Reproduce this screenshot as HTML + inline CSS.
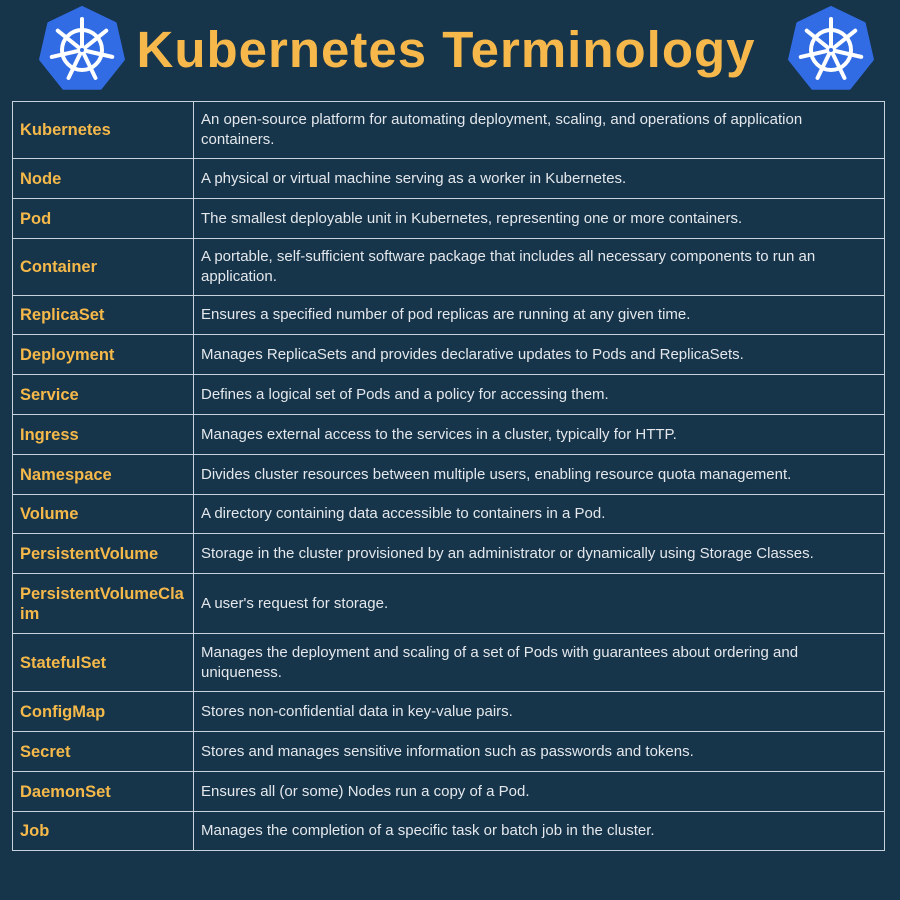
<!DOCTYPE html>
<html><head><meta charset="utf-8"><style>
body{margin:0;width:900px;height:900px;background:#16344a;font-family:"Liberation Sans",sans-serif;position:relative;overflow:hidden}
.t{position:absolute;left:0;width:892px;top:20px;text-align:center;font-size:51px;font-weight:bold;color:#f7b84b;letter-spacing:1px}
.logo{position:absolute;top:6px}
table{position:absolute;left:12px;top:101px;width:873px;border-collapse:collapse}
td{border:1.5px solid #c8d2dc;color:#e4e8ec;font-size:15px;line-height:20px;padding:0 7px;vertical-align:middle}
td.k{width:166px;color:#f5b94a;font-weight:bold;font-size:16.5px}
</style></head><body>
<svg class="logo" style="left:38px" width="88" height="88" viewBox="-44 -44 88 88"><g id="lg">
<polygon points="0,-42 32.8,-26.2 40.9,9.3 18.2,37.8 -18.2,37.8 -40.9,9.3 -32.8,-26.2" fill="#326ce5" stroke="#326ce5" stroke-width="4" stroke-linejoin="round"/>
<g stroke="#fff" fill="none" stroke-width="4" stroke-linecap="round">
<circle r="20"/>
<g id="s"><line x1="0" y1="-4" x2="0" y2="-31"/></g>
<use href="#s" transform="rotate(51.4)"/><use href="#s" transform="rotate(102.8)"/><use href="#s" transform="rotate(154.3)"/><use href="#s" transform="rotate(205.7)"/><use href="#s" transform="rotate(257.1)"/><use href="#s" transform="rotate(308.6)"/>
</g><circle r="4.5" fill="#fff"/><circle r="2" fill="#326ce5"/></g></svg>
<svg class="logo" style="left:787px" width="88" height="88" viewBox="-44 -44 88 88"><use href="#lg"/></svg>
<div class="t">Kubernetes Terminology</div>
<table>
<tr style="height:57px"><td class="k">Kubernetes</td><td>An open-source platform for automating deployment, scaling, and operations of application containers.</td></tr>
<tr style="height:40px"><td class="k">Node</td><td>A physical or virtual machine serving as a worker in Kubernetes.</td></tr>
<tr style="height:40px"><td class="k">Pod</td><td>The smallest deployable unit in Kubernetes, representing one or more containers.</td></tr>
<tr style="height:57px"><td class="k">Container</td><td>A portable, self-sufficient software package that includes all necessary components to run an application.</td></tr>
<tr style="height:39px"><td class="k">ReplicaSet</td><td>Ensures a specified number of pod replicas are running at any given time.</td></tr>
<tr style="height:40px"><td class="k">Deployment</td><td>Manages ReplicaSets and provides declarative updates to Pods and ReplicaSets.</td></tr>
<tr style="height:40px"><td class="k">Service</td><td>Defines a logical set of Pods and a policy for accessing them.</td></tr>
<tr style="height:40px"><td class="k">Ingress</td><td>Manages external access to the services in a cluster, typically for HTTP.</td></tr>
<tr style="height:40px"><td class="k">Namespace</td><td>Divides cluster resources between multiple users, enabling resource quota management.</td></tr>
<tr style="height:39px"><td class="k">Volume</td><td>A directory containing data accessible to containers in a Pod.</td></tr>
<tr style="height:40px"><td class="k">PersistentVolume</td><td>Storage in the cluster provisioned by an administrator or dynamically using Storage Classes.</td></tr>
<tr style="height:60px"><td class="k">PersistentVolumeCla<br>im</td><td>A user's request for storage.</td></tr>
<tr style="height:58px"><td class="k">StatefulSet</td><td>Manages the deployment and scaling of a set of Pods with guarantees about ordering and uniqueness.</td></tr>
<tr style="height:40px"><td class="k">ConfigMap</td><td>Stores non-confidential data in key-value pairs.</td></tr>
<tr style="height:40px"><td class="k">Secret</td><td>Stores and manages sensitive information such as passwords and tokens.</td></tr>
<tr style="height:40px"><td class="k">DaemonSet</td><td>Ensures all (or some) Nodes run a copy of a Pod.</td></tr>
<tr style="height:39px"><td class="k">Job</td><td>Manages the completion of a specific task or batch job in the cluster.</td></tr>
</table>
</body></html>
